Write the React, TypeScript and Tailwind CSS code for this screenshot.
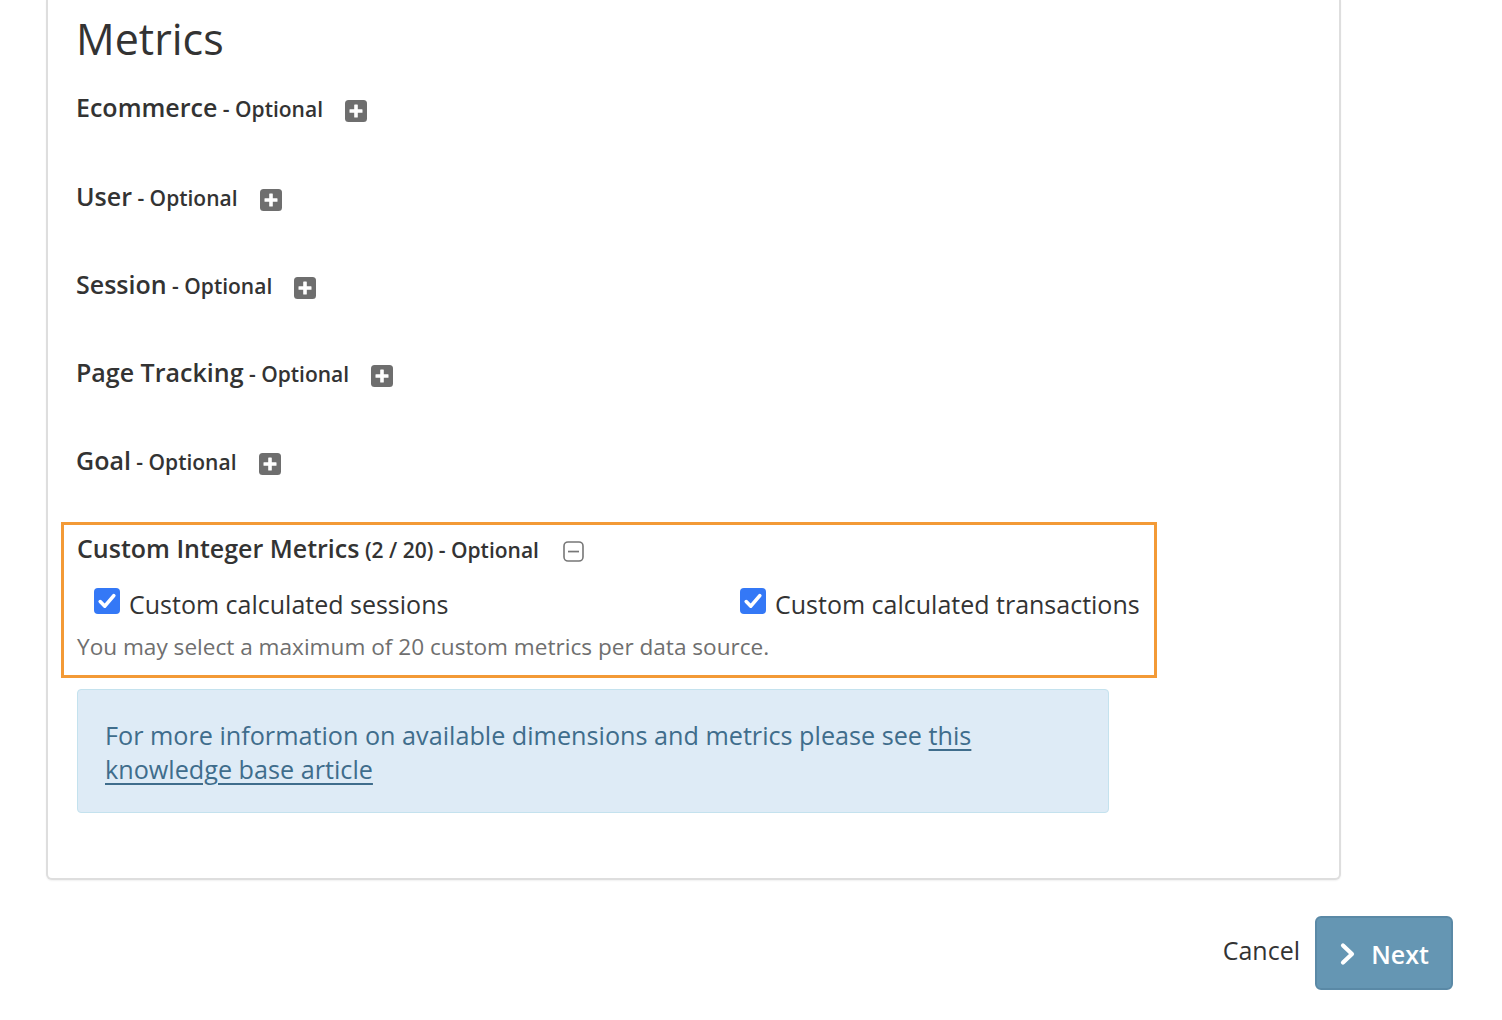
import React from "react";

function PlusBox() {
  return (
    <svg width="22" height="22" viewBox="0 0 22 22" className="shrink-0">
      <rect x="0" y="0" width="22" height="22" rx="3.5" fill="#6e6e6e" />
      <rect x="9.2" y="4.5" width="3.6" height="13" rx="0.6" fill="#ffffff" />
      <rect x="4.5" y="9.2" width="13" height="3.6" rx="0.6" fill="#ffffff" />
    </svg>
  );
}

function MinusBox() {
  return (
    <svg width="21" height="21" viewBox="0 0 21 21" className="shrink-0">
      <rect x="1" y="1" width="19" height="19" rx="4" fill="none" stroke="#777777" strokeWidth="1.6" />
      <rect x="5" y="9.7" width="11" height="1.7" fill="#777777" />
    </svg>
  );
}

function CheckBox() {
  return (
    <svg width="26" height="26" viewBox="0 0 26 26" className="shrink-0">
      <rect x="0" y="0" width="26" height="26" rx="4" fill="#3478f6" />
      <path d="M6.2 13.6 L10.8 18.2 L19.8 7.6" fill="none" stroke="#ffffff" strokeWidth="3.6" strokeLinecap="round" strokeLinejoin="round" />
    </svg>
  );
}

function Section({ title, mt }: { title: string; mt: string }) {
  return (
    <div className={`flex items-start h-[34px] ${mt}`}>
      <div className="leading-[34px] whitespace-nowrap">
        <span className="text-[25px] font-semibold text-[#333333]">{title}</span>
        <span className="text-[21px] font-semibold text-[#333333]"> - Optional</span>
      </div>
      <div className="ml-[22px] mt-[10px]">
        <PlusBox />
      </div>
    </div>
  );
}

export default function App() {
  return (
    <div className="min-h-[1020px] w-[1502px] bg-white" style={{ fontFamily: '"Open Sans", "Liberation Sans", sans-serif' }}>
      <div className="ml-[46px] w-[1295px] border-x-2 border-b-2 border-[#dedede] rounded-b-[6px] bg-white pl-[28px] pt-[14px] pb-[65px] shadow-[0_1px_2px_rgba(0,0,0,0.06)]">
        <h1 className="text-[43px] leading-[50px] font-normal text-[#333333]">Metrics</h1>
        <Section title="Ecommerce" mt="mt-[26px]" />
        <Section title="User" mt="mt-[55px]" />
        <Section title="Session" mt="mt-[54px]" />
        <Section title="Page Tracking" mt="mt-[54px]" />
        <Section title="Goal" mt="mt-[54px]" />

        <div className="-ml-[15px] mt-[45px] w-[1096px] border-[3px] border-[#f39a36] pl-[13px] pt-[6px] pb-[13px]">
          <div className="flex items-start h-[34px]">
            <div className="leading-[34px] whitespace-nowrap">
              <span className="text-[25px] font-semibold text-[#333333]">Custom Integer Metrics</span>
              <span className="text-[21px] font-semibold text-[#333333]"> (2 / 20) - Optional</span>
            </div>
            <div className="ml-[24px] mt-[10px]">
              <MinusBox />
            </div>
          </div>
          <div className="flex mt-[23px] pl-[17px]">
            <label className="flex items-start w-[646px]">
              <CheckBox />
              <span className="ml-[9px] -mt-[1px] text-[25px] leading-[34px] text-[#333333]">Custom calculated sessions</span>
            </label>
            <label className="flex items-start">
              <CheckBox />
              <span className="ml-[9px] -mt-[1px] text-[25px] leading-[34px] text-[#333333]">Custom calculated transactions</span>
            </label>
          </div>
          <p className="mt-[11px] text-[22.6px] leading-[30px] text-[#6f6f6f]">
            You may select a maximum of 20 custom metrics per data source.
          </p>
        </div>

        <div className="ml-[1px] mt-[11px] w-[1032px] rounded-[4px] border border-[#c4e2ee] bg-[#deebf6] pl-[27px] pr-[26px] pt-[28px] pb-[26px]">
          <p className="text-[25.2px] leading-[34px] text-[#3f6d8c]">
            For more information on available dimensions and metrics please see{" "}
            <a className="underline underline-offset-[4px] decoration-[1.5px]" href="#">this knowledge base article</a>
          </p>
        </div>
      </div>

      <div className="flex justify-end items-center pr-[49px] mt-[36px]">
        <button className="text-[25px] leading-[34px] text-[#333333] mr-[15px] mt-[-6px]">Cancel</button>
        <button className="flex items-center justify-center w-[138px] h-[74px] rounded-[6px] border-2 border-[#5a89a6] bg-[#6596b3] text-white">
          <svg width="18" height="24" viewBox="0 0 18 24" className="mr-[14px] mt-[1px]">
            <path d="M4 3.5 L13 12 L4 20.5" fill="none" stroke="#ffffff" strokeWidth="4.2" strokeLinecap="round" strokeLinejoin="round" />
          </svg>
          <span className="text-[25px] font-semibold leading-[34px] mt-[2px]">Next</span>
        </button>
      </div>
    </div>
  );
}
